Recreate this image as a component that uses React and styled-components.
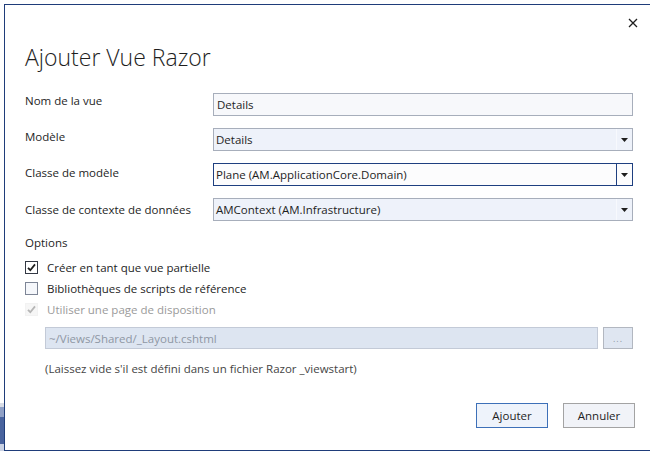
import React from "react";
import styled, { createGlobalStyle, css } from "styled-components";

const GlobalStyle = createGlobalStyle`
  html, body {
    margin: 0;
    padding: 0;
    width: 650px;
    height: 453px;
    overflow: hidden;
    background: #ffffff;
  }
  body {
    font-family: "Open Sans", "Noto Sans", sans-serif;
    font-size: 11.5px;
    color: #1e1e1e;
  }
`;

// Page frame: a sliver of the IDE behind, then the dialog
const Page = styled.div`
  display: flex;
  padding-top: 4px;
  height: 453px;
  box-sizing: border-box;
`;

const Backdrop = styled.div`
  flex: none;
  width: 4px;
  display: flex;
  flex-direction: column;
  padding-top: 399px;
`;

const BackdropBand = styled.div`
  height: ${(p) => p.h}px;
  background: ${(p) => p.color};
`;

const Dialog = styled.div`
  flex: none;
  width: 660px;
  height: 447px;
  box-sizing: border-box;
  border: 1px solid #1f3d7a;
  border-right: none;
  background: #ffffff;
  padding: 0 31px 0 20px;
  display: flex;
  flex-direction: column;
`;

const CloseRow = styled.div`
  height: 36px;
  display: flex;
  justify-content: flex-end;
  align-items: center;
  margin-right: -8px;
`;

const CloseButton = styled.button`
  width: 16px;
  height: 16px;
  padding: 0;
  border: none;
  background: transparent;
  display: flex;
  align-items: center;
  justify-content: center;
  color: #1e1e1e;
`;

const Title = styled.h1`
  margin: 0;
  font-family: "Open Sans", "Noto Sans", sans-serif;
  font-weight: 300;
  font-size: 23px;
  line-height: 32px;
  color: #1e1e1e;
`;

const FormGrid = styled.div`
  margin-top: 20px;
  display: grid;
  grid-template-columns: 188px 1fr;
  row-gap: 12px;
`;

const FieldLabel = styled.label`
  padding-top: ${(p) => p.offset}px;
  line-height: 16px;
  color: #1e1e1e;
`;

const fieldBase = css`
  height: 23px;
  box-sizing: border-box;
  display: flex;
  align-items: center;
  font-size: 11.5px;
  color: #1e1e1e;
`;

const TextBox = styled.div`
  ${fieldBase}
  border: 1px solid #a7aebb;
  background: #f7f8fb;
  padding-left: 3px;
`;

const Combo = styled.div`
  ${fieldBase}
  border: 1px solid ${(p) => (p.focused ? "#1e3f80" : "#a7aebb")};
  background: ${(p) => (p.focused ? "#fcfcfd" : "#eef2fa")};
`;

const ComboText = styled.span`
  flex: 1;
  padding-left: 2px;
  white-space: nowrap;
`;

const ComboArrow = styled.span`
  width: 15px;
  align-self: stretch;
  display: flex;
  align-items: center;
  justify-content: center;
  border-left: 1px solid ${(p) => (p.focused ? "#1e3f80" : "#f7f9fd")};
`;

const OptionsTitle = styled.div`
  margin-top: 14px;
  line-height: 16px;
`;

const CheckList = styled.div`
  margin-top: 10px;
  display: flex;
  flex-direction: column;
  gap: 8px;
`;

const CheckRow = styled.div`
  height: 13px;
  display: flex;
  align-items: center;
  gap: 9px;
  color: ${(p) => (p.disabled ? "#9a9a9a" : "#1e1e1e")};
  line-height: 16px;
`;

const Box = styled.span`
  flex: none;
  width: 13px;
  height: 13px;
  box-sizing: border-box;
  display: flex;
  align-items: center;
  justify-content: center;
  ${(p) =>
    p.disabled
      ? css`
          border: 1px solid #f2f2f2;
          background: #f6f6f6;
        `
      : css`
          border: 1px solid ${p.checked ? "#333844" : "#7d8596"};
          background: ${p.checked ? "#ffffff" : "#f5f7fb"};
        `}
`;

const PathRow = styled.div`
  margin-top: 11px;
  padding-left: 20px;
  display: flex;
  gap: 5px;
`;

const PathInput = styled.div`
  flex: 1;
  height: 22px;
  box-sizing: border-box;
  border: 1px solid #c3cad7;
  background: #dde5f1;
  color: #8f97a4;
  display: flex;
  align-items: center;
  padding-left: 3px;
`;

const BrowseButton = styled.div`
  width: 30px;
  height: 22px;
  box-sizing: border-box;
  border: 1px solid #b2b7c0;
  background: #dfe6f1;
  color: #8f97a4;
  display: flex;
  align-items: center;
  justify-content: center;
  font-size: 9px;
  letter-spacing: 1px;
`;

const Hint = styled.div`
  margin-top: 12px;
  padding-left: 20px;
  line-height: 16px;
  color: #454545;
`;

const Footer = styled.div`
  margin-top: auto;
  padding-bottom: 22px;
  margin-right: -2px;
  display: flex;
  justify-content: flex-end;
  gap: 15px;
`;

const Button = styled.button`
  width: 72px;
  height: 25px;
  box-sizing: border-box;
  font-family: "Open Sans", "Noto Sans", sans-serif;
  font-size: 11.5px;
  color: #1e1e1e;
  padding: 0;
  border: 1px solid ${(p) => (p.primary ? "#3d70b8" : "#a3a3a3")};
  background: ${(p) => (p.primary ? "#eef3fb" : "#f1f3f8")};
`;

const Arrow = () => (
  <svg width="7" height="4" viewBox="0 0 7 4">
    <path d="M0 0h7L3.5 4z" fill="#1e1e1e" />
  </svg>
);

const Check = ({ color }) => (
  <svg width="9" height="9" viewBox="0 0 9 9">
    <path d="M1 4.8l2.3 2.4L8 1.4" fill="none" stroke={color} strokeWidth="1.8" />
  </svg>
);

const fields = [
  { label: "Nom de la vue", value: "Details", type: "text", offset: 0 },
  { label: "Modèle", value: "Details", type: "combo", offset: 1 },
  { label: "Classe de modèle", value: "Plane (AM.ApplicationCore.Domain)", type: "combo", focused: true, offset: 2 },
  { label: "Classe de contexte de données", value: "AMContext (AM.Infrastructure)", type: "combo", offset: 4 },
];

const options = [
  { label: "Créer en tant que vue partielle", checked: true },
  { label: "Bibliothèques de scripts de référence", checked: false },
  { label: "Utiliser une page de disposition", checked: true, disabled: true },
];

const App = () => {
  return (
    <>
      <GlobalStyle />
      <Page>
        <Backdrop>
          <BackdropBand h={4} color="#d9dde6" />
          <BackdropBand h={10} color="#8fa0c6" />
          <BackdropBand h={27} color="#49639e" />
          <BackdropBand h={7} color="#c9d1e3" />
        </Backdrop>
        <Dialog>
          <CloseRow>
            <CloseButton aria-label="Fermer">
              <svg width="10" height="10" viewBox="0 0 10 10">
                <path d="M1 1l8 8M9 1L1 9" stroke="#1e1e1e" strokeWidth="1.3" />
              </svg>
            </CloseButton>
          </CloseRow>
          <Title>Ajouter Vue Razor</Title>
          <FormGrid>
            {fields.map((f) => (
              <React.Fragment key={f.label}>
                <FieldLabel offset={f.offset}>{f.label}</FieldLabel>
                {f.type === "text" ? (
                  <TextBox>{f.value}</TextBox>
                ) : (
                  <Combo focused={f.focused}>
                    <ComboText>{f.value}</ComboText>
                    <ComboArrow focused={f.focused}>
                      <Arrow />
                    </ComboArrow>
                  </Combo>
                )}
              </React.Fragment>
            ))}
          </FormGrid>
          <OptionsTitle>Options</OptionsTitle>
          <CheckList>
            {options.map((o) => (
              <CheckRow key={o.label} disabled={o.disabled}>
                <Box checked={o.checked} disabled={o.disabled}>
                  {o.checked && <Check color={o.disabled ? "#b5b5b5" : "#1e1e1e"} />}
                </Box>
                {o.label}
              </CheckRow>
            ))}
          </CheckList>
          <PathRow>
            <PathInput>~/Views/Shared/_Layout.cshtml</PathInput>
            <BrowseButton>...</BrowseButton>
          </PathRow>
          <Hint>(Laissez vide s'il est défini dans un fichier Razor _viewstart)</Hint>
          <Footer>
            <Button primary>Ajouter</Button>
            <Button>Annuler</Button>
          </Footer>
        </Dialog>
      </Page>
    </>
  );
};

export default App;
